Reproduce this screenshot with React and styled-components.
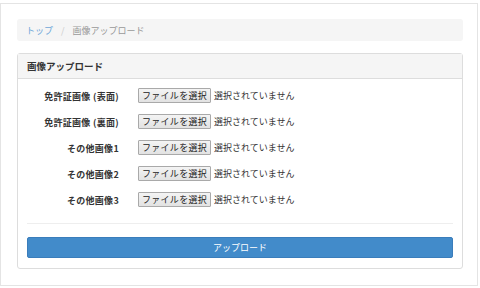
import React from 'react'
import styled, { createGlobalStyle } from 'styled-components'

const GlobalStyle = createGlobalStyle`
  html, body {
    margin: 0;
    padding: 0;
    background: #ffffff;
  }
  body {
    font-family: "Noto Sans CJK JP", "Liberation Sans", sans-serif;
    color: #333;
  }
`

const Frame = styled.div`
  margin-top: 3px;
  width: 478px;
  height: 283px;
  border: 1px solid #e4e4e4;
  padding: 15px 14px 0 16px;
  box-sizing: border-box;
`

const Breadcrumb = styled.div`
  height: 22px;
  background-color: #f5f5f5;
  border-radius: 3px;
  display: flex;
  align-items: center;
  padding-left: 9px;
  font-size: 9px;
  gap: 6px;
`

const Crumb = styled.span`
  color: ${props => props.link ? '#6fa7d8' : '#999'};
`

const Sep = styled.span`
  color: #ccc;
  padding: 0 2px;
`

const Panel = styled.div`
  margin-top: 12px;
  border: 1px solid #dddddd;
  border-radius: 3px;
`

const PanelHeader = styled.div`
  height: 24px;
  background-color: #f5f5f5;
  border-bottom: 1px solid #dddddd;
  display: flex;
  align-items: center;
  padding-left: 9px;
  font-size: 9.5px;
  font-weight: bold;
  color: #333;
`

const PanelBody = styled.div`
  padding: 3px 9px 10px 9px;
`

const Row = styled.div`
  height: 26px;
  display: flex;
  align-items: center;
`

const Label = styled.div`
  width: 92px;
  text-align: right;
  font-size: 9px;
  font-weight: bold;
  letter-spacing: 0.3px;
  padding-top: 3px;
  color: #333;
  white-space: nowrap;
`

const FileBox = styled.div`
  margin-left: 19px;
  display: flex;
  align-items: center;
  font-size: 9px;
`

const FileButton = styled.button`
  height: 15px;
  width: 73px;
  padding: 0;
  font-family: inherit;
  font-size: 9px;
  line-height: 13px;
  color: #222;
  background: linear-gradient(#f4f4f4, #e2e2e2);
  border: 1px solid #a9a9a9;
  border-radius: 1px;
  letter-spacing: 0.3px;
`

const FileStatus = styled.span`
  margin-left: 3px;
  color: #333;
`

const Divider = styled.div`
  margin-top: 11px;
  border-top: 1px solid #eeeeee;
`

const SubmitButton = styled.button`
  display: block;
  margin-top: 13px;
  width: 100%;
  height: 21px;
  background-color: #428bca;
  border: 1px solid #3a7dbb;
  border-radius: 2px;
  color: #fff;
  font-family: inherit;
  font-size: 9px;
  padding: 0;
`

const fields = [
  '免許証画像 (表面)',
  '免許証画像 (裏面)',
  'その他画像1',
  'その他画像2',
  'その他画像3',
]

const App = () => (
  <>
    <GlobalStyle />
    <Frame>
      <Breadcrumb>
        <Crumb link>トップ</Crumb>
        <Sep>/</Sep>
        <Crumb>画像アップロード</Crumb>
      </Breadcrumb>
      <Panel>
        <PanelHeader>画像アップロード</PanelHeader>
        <PanelBody>
          {fields.map((f, i) => (
            <Row key={i}>
              <Label>{f}</Label>
              <FileBox>
                <FileButton>ファイルを選択</FileButton>
                <FileStatus>選択されていません</FileStatus>
              </FileBox>
            </Row>
          ))}
          <Divider />
          <SubmitButton>アップロード</SubmitButton>
        </PanelBody>
      </Panel>
    </Frame>
  </>
)

export default App
